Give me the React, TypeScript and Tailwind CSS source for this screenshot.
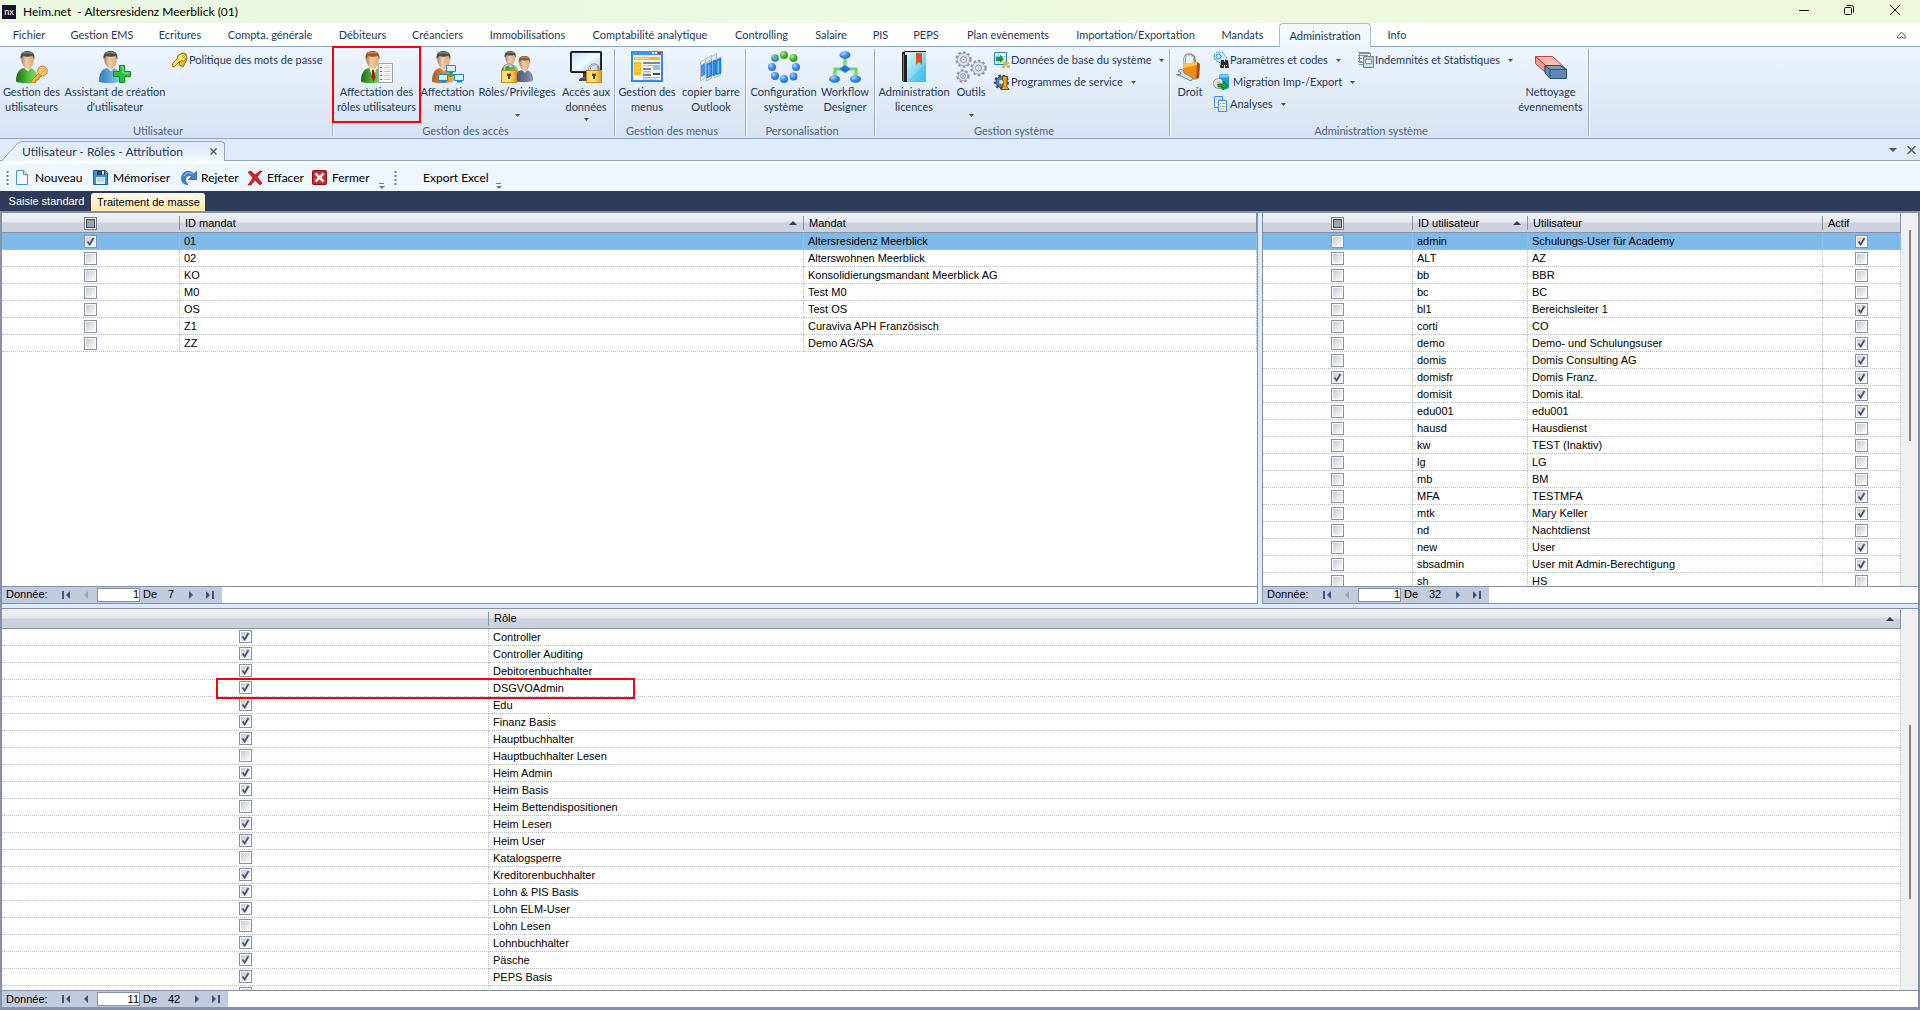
import type { ReactNode } from "react";

/* ---------- window chrome glyphs ---------- */

const DownArrow = () => (
  <svg width="5" height="3" viewBox="0 0 5 3" aria-hidden="true" className="shrink-0">
    <path d="M0 0h5L2.5 3z" fill="#4a5361" />
  </svg>
);

const Overflow = () => (
  <button type="button" aria-label="Options de barre d'outils" className="mt-4">
    <svg width="6" height="6" viewBox="0 0 6 6">
      <path d="M0 .5h5" stroke="#777" />
      <path d="M0 3h6L3 6z" fill="#777" />
    </svg>
  </button>
);

const Grip = () => (
  <svg width="3" height="16" viewBox="0 0 3 16" aria-hidden="true" className="shrink-0">
    <path d="M1.5 1v14" stroke="#7d8088" strokeWidth="2" strokeDasharray="2 2" />
  </svg>
);

/* ---------- ribbon icons ---------- */

const Defs = () => (
  <svg width="0" height="0" className="absolute" aria-hidden="true">
    <defs>
      <linearGradient id="face" x1="0" x2="1">
        <stop offset="0" stopColor="#a87a58" />
        <stop offset="0.4" stopColor="#f0cda6" />
        <stop offset="1" stopColor="#dba878" />
      </linearGradient>
      <linearGradient id="green" x1="0" x2="1">
        <stop offset="0" stopColor="#1d6a14" />
        <stop offset="0.5" stopColor="#4fb838" />
        <stop offset="1" stopColor="#8ede6b" />
      </linearGradient>
      <linearGradient id="blue" x1="0" x2="1">
        <stop offset="0" stopColor="#3279b8" />
        <stop offset="1" stopColor="#8fcdf5" />
      </linearGradient>
      <linearGradient id="orange" x1="0" x2="1">
        <stop offset="0" stopColor="#b85a12" />
        <stop offset="1" stopColor="#f7a94e" />
      </linearGradient>
      <linearGradient id="slate" x1="0" x2="1">
        <stop offset="0" stopColor="#475068" />
        <stop offset="1" stopColor="#8b96b0" />
      </linearGradient>
      <linearGradient id="gold" x1="0" x2="1">
        <stop offset="0" stopColor="#f7d25a" />
        <stop offset="0.45" stopColor="#ffeb90" />
        <stop offset="1" stopColor="#d79a1c" />
      </linearGradient>
      <linearGradient id="screen" x1="0" y1="0" x2="1" y2="1">
        <stop offset="0" stopColor="#c4e6fb" />
        <stop offset="0.5" stopColor="#eef9ff" />
        <stop offset="1" stopColor="#a4d4f4" />
      </linearGradient>
      <linearGradient id="book" x1="0" y1="0" x2="1" y2="1">
        <stop offset="0" stopColor="#d6f6ff" />
        <stop offset="1" stopColor="#3dbfee" />
      </linearGradient>
      <radialGradient id="dotb" cx="0.35" cy="0.3" r="0.8">
        <stop offset="0" stopColor="#a8d2ff" />
        <stop offset="0.5" stopColor="#3b8cf0" />
        <stop offset="1" stopColor="#1f62c4" />
      </radialGradient>
      <radialGradient id="dotg" cx="0.35" cy="0.3" r="0.8">
        <stop offset="0" stopColor="#b7ee94" />
        <stop offset="0.5" stopColor="#55b52e" />
        <stop offset="1" stopColor="#2f8a17" />
      </radialGradient>
    </defs>
  </svg>
);

const Svg = ({ size, children }: { size: number; children: ReactNode }) => (
  <svg width={size} height={size} viewBox={`0 0 ${size} ${size}`} fill="none" aria-hidden="true" className="shrink-0">
    {children}
  </svg>
);

const Person = ({ suit, hair = "#4d4d4d", tie = false }: { suit: string; hair?: string; tie?: boolean }) => (
  <g>
    <path d="M0 30c0-8 3-12 8-13h6c5 1 8 5 8 12 0 2-4 3-11 3S0 31.500 0 30z" fill={suit} />
    {tie ? <path d="M8 16l4 12 4-12z" fill="#f4f4f4" /> : <path d="M8 17l4 3.500 3-3.500z" fill="#dfe7ea" />}
    {tie && <path d="M11 19h2l1.500 7-2 5-2-5z" fill="#b01818" />}
    <path d="M5 6c0-4 3-6 6-6s7 2 7 6c0 6-2 12-6 12S5 12 5 6z" fill="url(#face)" />
    <path d="M4.500 8C4 2 7 0 11.500 0S19 2 18.500 8.500c-1-1-1-2.500-2-3.500-3 1-7 1-9 0-1 1-2 2-3 3z" fill={hair} />
    <path d="M7 2.500q4-2 9 0" stroke="#fff" strokeOpacity="0.300" strokeWidth="1.500" />
  </g>
);

const Padlock = ({ x, y }: { x: number; y: number }) => (
  <g transform={`translate(${x} ${y})`}>
    <path d="M3.500 8V6a4.500 4.500 0 0 1 9 0v2" stroke="#8d959b" strokeWidth="2.500" />
    <path d="M3.200 8V6a4.500 4.500 0 0 1 8-2.500" stroke="#e4e9ec" strokeWidth="1" />
    <rect x="0.500" y="7.500" width="15" height="12" fill="url(#gold)" stroke="#c58f1a" />
    <path d="M6 10.500h4v2.500H9v3H7v-3H6z" fill="#6b4208" />
  </g>
);

const UserKey = () => (
  <Svg size={32}>
    <Person suit="url(#green)" />
    <path d="M15 30l8-8 3 3-3 1v2l-3 1-1 3h-3z" fill="#f5b63e" stroke="#c07718" />
    <circle cx="26.500" cy="20" r="4.800" fill="#fbc765" stroke="#c9812a" />
    <circle cx="27.500" cy="19" r="1.500" fill="#fff" stroke="#c9812a" strokeWidth="0.800" />
  </Svg>
);
const UserPlus = () => (
  <Svg size={32}>
    <Person suit="url(#blue)" />
    <path d="M20.500 14.500h5v6h6v5h-6v6h-5v-6h-6v-5h6z" fill="#2fbf3a" stroke="#138a1e" />
    <path d="M22 16h2v6h6" stroke="#93f09a" />
  </Svg>
);
const UserList = () => (
  <Svg size={32}>
    <Person suit="url(#green)" hair="#a3551c" tie />
    <path d="M17.500 12.500h14v19h-14z" fill="#fafafa" stroke="#a3a3a3" />
    <path d="M19 16.500h2M19 20.500h2M19 24.500h2M19 28.500h2" stroke="#e23030" />
    <path d="M22.500 16.500h7M22.500 20.500h7M22.500 24.500h7M22.500 28.500h7" stroke="#c0c0c0" />
    <path d="M23 14.500h6M23 18.500h6M23 22.500h6M23 26.500h6" stroke="#e2e2e2" />
  </Svg>
);
const UserNet = () => (
  <Svg size={32}>
    <Person suit="url(#orange)" />
    <path d="M19 20v6M11 24h14" stroke="#3ba93b" strokeWidth="2" />
    <g fill="#d9f0ff" stroke="#1a8ccf">
      <path d="M14.500 14.500h9v6h-9zM6.500 23.500h9v6h-9zM22.500 23.500h9v6h-9z" />
    </g>
    <path d="M17 21.500h4M9 30.500h5M25 30.500h5" stroke="#1a8ccf" strokeWidth="2" />
  </Svg>
);
const RolesIcon = () => (
  <Svg size={32}>
    <g transform="scale(0.8)">
      <Person suit="url(#green)" />
    </g>
    <g transform="translate(14 5) scale(0.82)">
      <Person suit="url(#slate)" hair="#8a5c30" />
    </g>
    <Padlock x={0} y={12} />
  </Svg>
);
const DataAccess = () => (
  <Svg size={32}>
    <rect x="0.500" y="0.500" width="31" height="21" rx="1" fill="#2e3033" stroke="#17181a" />
    <rect x="2" y="2" width="28" height="18" fill="url(#screen)" />
    <path d="M13 22h6v4h-6z" fill="#3a3c3f" />
    <path d="M9 29c0-2 3-3 8-3v4H9z" fill="#4b4e52" />
    <Padlock x={16} y={12} />
  </Svg>
);
const MenuWindow = () => (
  <Svg size={32}>
    <rect x="1" y="1" width="30" height="29" fill="#f1f2f4" stroke="#3489ee" strokeWidth="2" />
    <path d="M1 0h30v4H1z" fill="#3f93f3" />
    <path d="M21 2h5" stroke="#fff" strokeWidth="2" strokeDasharray="2 1" />
    <path d="M27 1h3v2h-3z" fill="#e4262b" />
    <path d="M3 6h26v3H3zM3 11h7v13H3z" fill="#fbbd13" />
    <path d="M4 7.500h14M4 14h5M4 17h5M4 20h5" stroke="#fde08a" />
    <path d="M12 12h17M12 18h8M12 24h8" stroke="#5e6166" strokeWidth="1.500" />
    <path d="M12 14.500h17M12 20.500h8M12 22h8M12 26.500h17M12 28h14" stroke="#b9bcc2" />
    <path d="M22 14h7v5h-7z" fill="#8cc2f4" />
    <path d="M22 22h7v2h-7z" fill="#4a4d52" />
  </Svg>
);
const OutlookBar = () => (
  <Svg size={32}>
    <path d="M5.500 11l5-3v19l-5 3zM10.500 8l6-3.500V8l-6 4zM16.500 6l5-3.500V8l-5 3z" fill="#e8ebee" stroke="#b3bac2" />
    <path d="M6 14l4-2v12l-4 2z" fill="#3a94ee" />
    <path d="M11.500 12l5-3v18l-5 3zM19.500 9l6-3v18l-6 3z" fill="#eef1f4" stroke="#b3bac2" />
    <path d="M12 13l5-2.500v14L12 27zM18 10l3-1v14l-3 2zM21.500 9l4.500-2v15l-4.500 2z" fill="#1f8cf0" stroke="#1767b8" strokeWidth="0.600" />
    <path d="M13 14l1.500-.5v11l-1.500.5zM22.500 10l1.500-.5v12l-1.500.5z" fill="#6cbcff" />
  </Svg>
);
const DotRing = () => (
  <Svg size={32}>
    {[
      [16, 4, 4, "g"],
      [25.5, 7, 4, "g"],
      [28, 16, 4, "b"],
      [25.5, 25.5, 4, "b"],
      [16, 28, 4, "b"],
      [7, 25, 4, "b"],
      [4, 16, 4, "b"],
      [7, 7, 3.8, "b"],
    ].map(([x, y, r, c], i) => (
      <circle key={i} cx={x} cy={y} r={r} fill={c === "g" ? "url(#dotg)" : "url(#dotb)"} />
    ))}
    <circle cx="7" cy="7" r="2" fill="#5fc23c" />
  </Svg>
);
const WorkflowIcon = () => (
  <Svg size={32}>
    <path d="M16 7v8M12 18H6v6M20 18h7v6" stroke="#6fd25c" strokeWidth="3" />
    <path d="M13 11h6l-3 4zM3 22h6l-3 4zM24 22h6l-3 4z" fill="#8ae678" />
    <ellipse cx="16" cy="4" rx="5.500" ry="3.800" fill="url(#dotb)" />
    <path d="M16 14l6 4-6 4-6-4z" fill="#2273d6" stroke="#6fb3fa" strokeWidth="0.600" />
    <ellipse cx="5.500" cy="28" rx="5.500" ry="3.800" fill="url(#dotb)" />
    <ellipse cx="26.500" cy="28" rx="5.500" ry="3.800" fill="url(#dotb)" />
  </Svg>
);
const BookIcon = () => (
  <Svg size={32}>
    <path d="M4 1.500L7 0h21v31H6l-2-1z" fill="#1f2022" />
    <path d="M7 1h21v3H7z" fill="#d9dcdf" />
    <path d="M9 2h19v29H9z" fill="url(#book)" />
    <path d="M5.500 3v27" stroke="#77797c" />
    <path d="M18 2h6v12l-3-3-3 3z" fill="#d9531e" />
    <path d="M9 31L28 12v19z" fill="#37b4e6" opacity="0.350" />
  </Svg>
);
const Gear = ({ x, y, r }: { x: number; y: number; r: number }) => (
  <g>
    <circle cx={x} cy={y} r={r} stroke="#8f94b4" strokeWidth="2.400" strokeDasharray="2.600 2" />
    <circle cx={x} cy={y} r={r - 0.8} fill="#dcdeea" stroke="#9da2bf" strokeWidth="0.800" />
    <circle cx={x} cy={y} r={r / 2.4} fill="#f4f5fb" stroke="#8287a8" />
    <circle cx={x} cy={y} r="0.800" fill="#6f7494" />
  </g>
);
const GearsIcon = () => (
  <Svg size={32}>
    <Gear x={8.5} y={8.5} r={7} />
    <Gear x={23.5} y={17} r={7} />
    <Gear x={8} y={25} r={5.5} />
  </Svg>
);
const DroitIcon = () => (
  <Svg size={32}>
    <path d="M11 14l-.5-6c0-6 9.500-6 10 0l.5 5" stroke="#8f9190" strokeWidth="2.600" />
    <path d="M11 13l-.5-5c0-5 8-5 9-1" stroke="#eceeed" />
    <path d="M9 13l14-2 3 2-1 14-5 2-11-5z" fill="#f08d12" />
    <path d="M23 11l3 2-1 14-3 1z" fill="#b04c07" />
    <path d="M9 13l14-2v3L9 17z" fill="#ffc25a" />
    <path d="M4 20c3-3 6-1 6 2l9 5-2 3-10-5c-3 0-5-1-4-2l3 1 1-2z" fill="#cfe0ea" stroke="#6f8796" />
  </Svg>
);
const EraserIcon = () => (
  <Svg size={32}>
    <path d="M0.500 5.500h17l14 13H15.500L.500 5.500z" fill="#f6bdae" stroke="#b84848" />
    <path d="M.500 5.500v7L10 21v-7z" fill="#f09c8c" stroke="#b84848" />
    <path d="M10 14.500h15l6.500 4v9H15L10 22z" fill="#6287b4" stroke="#2f4d70" />
    <path d="M10 14.500h15l6.500 4H15z" fill="#7f9cc0" stroke="#2f4d70" />
    <path d="M15 18.500v9" stroke="#2f4d70" />
  </Svg>
);

/* ---------- small icons ---------- */

const KeysIcon = () => (
  <Svg size={16}>
    <path d="M10 1l4 1 1 5-4 8-4-2 1-5z" fill="#f0c020" stroke="#8d6c0a" />
    <path d="M6 3l6-2 3 4-3 4-4 0-6 6-2-1 1-3 4-4z" fill="#fbe068" stroke="#9a7610" />
    <circle cx="11.500" cy="4.500" r="1" fill="#fff" stroke="#9a7610" strokeWidth="0.700" />
  </Svg>
);
const DataBaseIcon = () => (
  <Svg size={16}>
    <path d="M.5.500h12v12H.500z" fill="#fff" stroke="#2b83e0" />
    <path d="M1 4.500h11M1 9h11M4.500 1v11" stroke="#9cc6f2" />
    <path d="M2 5h4V2.500L10 7l-4 4V9H2z" fill="#1c9a2a" />
    <path d="M9 10h6v2H9zM10 12h2v2h-2zM13 13h3v3h-3zM8 14h3v2H8z" fill="#f6b417" />
  </Svg>
);
const ServiceIcon = () => (
  <Svg size={16}>
    <circle cx="7.500" cy="8" r="6.300" stroke="#344f7c" strokeWidth="2.500" strokeDasharray="2.500 1.800" />
    <circle cx="7.500" cy="8" r="5.500" fill="#5b7cae" stroke="#2b4470" />
    <path d="M8 2.500h6l-1 2v8l2 3H7l2-3V7z" fill="#f0a51c" stroke="#80500a" />
    <circle cx="7" cy="8" r="2" fill="#dfe9f7" />
  </Svg>
);
const ParamIcon = () => (
  <Svg size={16}>
    <path d="M1 3l3-3h5l5 6-5 6-7-4z" fill="#d4eaff" stroke="#2f8ae2" strokeDasharray="2 1" />
    <circle cx="5.500" cy="4.500" r="2.500" stroke="#2f8ae2" />
    <path d="M8 8h3v2h1V8h3l1 8h-4v-3h-1v3H7z" fill="#2b2b2b" />
    <path d="M9 13.500h1M13 13.500h1" stroke="#ddd" />
  </Svg>
);
const MigrationIcon = () => (
  <Svg size={16}>
    <path d="M6 1c3-1.500 7-1.500 10 0v13c-3 2-7 2-10 0z" fill="#1c9be8" />
    <ellipse cx="11" cy="2" rx="5" ry="1.600" fill="#7fd0fa" />
    <circle cx="5.500" cy="9.500" r="5" fill="#e4e6e8" stroke="#8c9196" />
    <circle cx="5.500" cy="9.500" r="1.500" fill="#fff" stroke="#8c9196" />
    <path d="M5 10h5V7l5 4.500-5 4.500v-3H5z" fill="#27a32b" stroke="#0e6c14" strokeWidth="0.800" />
  </Svg>
);
const AnalysesIcon = () => (
  <Svg size={16}>
    <path d="M1.500.500h8v11h-8z" fill="#fff" stroke="#2f8cf0" />
    <path d="M5.500 4.500h8v11h-8z" fill="#fff" stroke="#2f8cf0" />
    <path d="M3 3.500h1M3 6.500h1M7 7.500h1M7 10.500h1M7 13h1" stroke="#f39a1c" />
    <path d="M5 3h3M9 7.500h3M9 10.500h3M9 13h3" stroke="#9aa3ad" />
  </Svg>
);
const StatsIcon = () => (
  <Svg size={16}>
    <path d="M1.500 1.500h11v9h-11z" fill="#eceff1" stroke="#838d94" />
    <path d="M0 .500h12M0 3.500h10M0 6.500h4M0 9.500h4M1 12.500h4" stroke="#838d94" />
    <path d="M5.500 4.500h10v11h-10z" fill="#b9d3de" stroke="#6d8794" />
    <path d="M7.500 7.500h6v4h-6z" fill="#fff" stroke="#5f9fc0" />
    <path d="M6 13.500h9" stroke="#eef6fa" />
  </Svg>
);

const NewIcon = () => (
  <Svg size={16}>
    <path d="M1.500.500h7l4 4v10h-11z" fill="#f5faff" stroke="#4c90d8" />
    <path d="M8.500.500v4h4" fill="#cfe4fa" stroke="#4c90d8" />
  </Svg>
);
const SaveIcon = () => (
  <Svg size={16}>
    <path d="M.500.500h12l2 2v12H.500z" fill="#3a8de0" stroke="#1f5fa8" />
    <path d="M4 1h8v4H4z" fill="#3a3f47" />
    <path d="M9 1h2v3.500H9z" fill="#e9edf2" />
    <path d="M3 7h9v7H3z" fill="#e9f3fd" />
    <path d="M4 9h7M4 11h7" stroke="#8fb8e0" />
  </Svg>
);
const RedoIcon = () => (
  <Svg size={16}>
    <path d="M15.500 1.500v8h-8l3-3C8 4.500 5 6 4.500 9c-.3 2 .5 4 2.500 5.500C3 14.500.500 12 .500 8.500c0-7 8-9.500 12.300-4.500z" fill="#3d85d2" stroke="#1e5da6" strokeWidth="0.800" />
    <path d="M3 6c2-4 6-4 8.500-1.500" stroke="#a4d0fa" />
  </Svg>
);
const DeleteIcon = () => (
  <Svg size={16}>
    <path d="M1 2l3-1 4 4 5-4 2 0-5 6 5 6-2 2-5-5-4 5-3 0 5-7z" fill="#d82222" stroke="#9c1212" strokeWidth="0.700" />
  </Svg>
);
const CloseIcon = () => (
  <Svg size={16}>
    <rect x="0.500" y="0.500" width="14" height="14" rx="1" fill="#d2252b" stroke="#8e1013" />
    <path d="M3.500 3.500l8 8M11.500 3.500l-8 8" stroke="#fff" strokeWidth="2.500" />
  </Svg>
);

/* ---------- ribbon ---------- */

const tabs: [string, string][] = [
  ["Fichier", "w-[58px]"],
  ["Gestion EMS", "w-[88px]"],
  ["Ecritures", "w-[68px]"],
  ["Compta. générale", "w-[112px]"],
  ["Débiteurs", "w-[73px]"],
  ["Créanciers", "w-[77px]"],
  ["Immobilisations", "w-[103px]"],
  ["Comptabilité analytique", "w-[142px]"],
  ["Controlling", "w-[81px]"],
  ["Salaire", "w-[58px]"],
  ["PIS", "w-[41px]"],
  ["PEPS", "w-[50px]"],
  ["Plan evènements", "w-[114px]"],
  ["Importation/Exportation", "w-[141px]"],
  ["Mandats", "w-[73px]"],
  ["Administration", "w-[92px]"],
  ["Info", "w-[52px]"],
];

type BigProps = { icon: ReactNode; lines: string[]; className: string; menu?: boolean };

const Big = ({ icon, lines, className, menu }: BigProps) => (
  <button type="button" className={`flex h-[76px] shrink-0 flex-col items-center pt-1 leading-[15px] whitespace-nowrap ${className}`}>
    {icon}
    {lines.map((l) => (
      <span key={l} className="first-of-type:mt-px">
        {l}
      </span>
    ))}
    {menu && (
      <span className={`mt-auto flex ${lines.length > 1 ? "pb-[2px]" : "pb-[6px]"}`}>
        <DownArrow />
      </span>
    )}
  </button>
);

const Small = ({ icon, label, menu = true, wide = false }: { icon: ReactNode; label: string; menu?: boolean; wide?: boolean }) => (
  <button type="button" className="flex h-[22px] items-center text-left whitespace-nowrap">
    {icon}
    <span className={wide ? "ml-1" : "ml-px"}>{label}</span>
    {menu && (
      <span className="ml-2">
        <DownArrow />
      </span>
    )}
  </button>
);

const Group = ({ label, className, children }: { label: string; className: string; children: ReactNode }) => (
  <section aria-label={label} className={`flex shrink-0 flex-col ${className}`}>
    <div className="flex flex-1 items-start">{children}</div>
    <div className="h-[18px] pr-4 text-center leading-[15px] text-[#4b6088]">{label}</div>
  </section>
);

const Divider = () => (
  <div className="my-[2px] w-px shrink-0 bg-[#9aaed0] shadow-[1px_0_0_#f6faff]" />
);

const Ribbon = () => (
  <div className="flex h-[92px] border-b border-[#8ea4c9] bg-linear-to-b from-[#edf5fe] to-[#d7e3f1] text-[#1e395b]">
    <Group label="Utilisateur" className="w-[332px]">
      <Big className="w-[63px]" icon={<UserKey />} lines={["Gestion des", "utilisateurs"]} />
      <Big className="w-[104px]" icon={<UserPlus />} lines={["Assistant de création", "d'utilisateur"]} />
      <div className="pt-[2px] pl-[5px]">
        <Small icon={<KeysIcon />} label="Politique des mots de passe" menu={false} />
      </div>
    </Group>
    <Divider />
    <Group label="Gestion des accès" className="w-[281px]">
      <Big className="-mt-px -ml-px h-[77px] w-[89px] border-2 border-[#fe0000] pt-[3px]" icon={<UserList />} lines={["Affectation des", "rôles utilisateurs"]} />
      <Big className="w-[53px]" icon={<UserNet />} lines={["Affectation", "menu"]} />
      <Big className="w-[86px]" icon={<RolesIcon />} lines={["Rôles/Privilèges"]} menu />
      <Big className="w-[52px]" icon={<DataAccess />} lines={["Accès aux", "données"]} menu />
    </Group>
    <Divider />
    <Group label="Gestion des menus" className="w-[130px]">
      <Big className="w-[64px]" icon={<MenuWindow />} lines={["Gestion des", "menus"]} />
      <Big className="w-[64px]" icon={<OutlookBar />} lines={["copier barre", "Outlook"]} />
    </Group>
    <Divider />
    <Group label="Personalisation" className="w-[128px]">
      <Big className="w-[75px]" icon={<DotRing />} lines={["Configuration", "système"]} />
      <Big className="w-[48px]" icon={<WorkflowIcon />} lines={["Workflow", "Designer"]} />
    </Group>
    <Divider />
    <Group label="Gestion système" className="w-[294px]">
      <Big className="w-[78px]" icon={<BookIcon />} lines={["Administration", "licences"]} />
      <Big className="w-[36px]" icon={<GearsIcon />} lines={["Outils"]} menu />
      <div className="pt-[2px] pl-[5px]">
        <Small icon={<DataBaseIcon />} label="Données de base du système" />
        <Small icon={<ServiceIcon />} label="Programmes de service" />
      </div>
    </Group>
    <Divider />
    <Group label="Administration système" className="w-[418px]">
      <Big className="w-[40px]" icon={<DroitIcon />} lines={["Droit"]} />
      <div className="w-[150px] pt-[2px] pl-[3px]">
        <Small icon={<ParamIcon />} label="Paramètres et codes" />
        <Small icon={<MigrationIcon />} label="Migration Imp-/Export" wide />
        <Small icon={<AnalysesIcon />} label="Analyses" />
      </div>
      <div className="pt-[2px] pl-[2px]">
        <Small icon={<StatsIcon />} label="Indemnités et Statistiques" />
      </div>
      <Big className="ml-auto w-[75px]" icon={<EraserIcon />} lines={["Nettoyage", "évennements"]} />
    </Group>
    <Divider />
  </div>
);

/* ---------- grid parts ---------- */

const Check = ({ label, checked }: { label: string; checked: boolean }) => (
  <label className="grid h-[13px] w-[13px] place-items-center border border-[#8491a8] bg-white">
    <input
      type="checkbox"
      aria-label={label}
      defaultChecked={checked}
      className="peer col-start-1 row-start-1 h-[9px] w-[9px] appearance-none bg-linear-to-br from-[#c6cad3] to-[#fbfbfc]"
    />
    <svg viewBox="0 0 9 9" className="pointer-events-none invisible col-start-1 row-start-1 h-[9px] w-[9px] peer-checked:visible">
      <path d="M1.500 4.500l2.200 3L7.500 1" fill="none" stroke="#3f5580" strokeWidth="1.800" />
    </svg>
  </label>
);

const CheckAll = ({ label }: { label: string }) => (
  <label className="flex h-[13px] w-[13px] items-center justify-center border border-[#6f7b90] bg-white">
    <input
      type="checkbox"
      aria-label={label}
      className="block h-[9px] w-[9px] shrink-0 appearance-none border border-[#3f4652] bg-[#9aa3b0]"
    />
  </label>
);

const SortArrow = () => (
  <svg width="8" height="4" viewBox="0 0 8 4" aria-hidden="true">
    <path d="M0 4h8L4 0z" fill="#2f3f60" />
  </svg>
);

const Th = ({ children, sorted, last, center }: { children?: ReactNode; sorted?: boolean; last?: boolean; center?: boolean }) => (
  <th
    scope="col"
    className={`h-5 border-b border-[#8491a8] bg-linear-to-b from-[#f0f1f4] from-0% via-[#e6e8ec] via-45% to-[#ccd1de] to-55% p-0 pt-px text-left font-normal ${last ? "border-r" : ""}`}
  >
    <div className={`flex h-[14px] items-center ${center ? "justify-center" : "justify-between pl-[5px]"} ${last ? "" : "border-r border-[#8491a8]"}`}>
      {children}
      {sorted && (
        <span className="pr-[6px]">
          <SortArrow />
        </span>
      )}
    </div>
  </th>
);

const cell = "h-[17px] border-r border-b border-dotted border-[#b9bfca] p-0 overflow-hidden whitespace-nowrap";
const Td = ({ children }: { children?: ReactNode }) => <td className={`${cell} pl-1 leading-4`}>{children}</td>;
const CheckTd = ({ label, checked }: { label: string; checked: boolean }) => (
  <td className={cell}>
    <div className="flex h-4 items-center justify-center">
      <Check label={label} checked={checked} />
    </div>
  </td>
);

const tableClass = "w-full table-fixed border-separate border-spacing-0";

const NavGlyph = ({ d, label, faint }: { d: string; label: string; faint?: boolean }) => (
  <button type="button" aria-label={label} className="flex h-4 w-5 items-center justify-center">
    <svg width="9" height="8" viewBox="0 0 9 8">
      <path d={d} fill={faint ? "#97a3b8" : "#3c5580"} />
    </svg>
  </button>
);

const Navigator = ({ id, value, total, atStart, width }: { id: string; value: string; total: string; atStart: boolean; width: string }) => (
  <div className="h-[18px] border-y border-[#8491a8] bg-white">
    <div className={`flex h-4 items-center bg-[#c2cbdb] pr-[2px] ${width}`}>
      <label htmlFor={id} className="w-[54px] pl-1">
        Donnée:
      </label>
      <NavGlyph label="Premier" d="M0 0h2v8H0zM8 0v8L4 4z" />
      <NavGlyph label="Précédent" d="M6 0v8L2 4z" faint={atStart} />
      <input
        id={id}
        type="text"
        defaultValue={value}
        className="ml-px h-[14px] w-[43px] border border-[#8491a8] bg-white text-right"
      />
      <span className="ml-[3px] w-[25px]">De</span>
      <span>{total}</span>
      <span className="ml-auto flex">
        <NavGlyph label="Suivant" d="M3 0v8l4-4z" />
        <NavGlyph label="Dernier" d="M0 0v8l4-4zM6 0h2v8H6z" />
      </span>
    </div>
  </div>
);

const Scroller = ({ className, size }: { className: string; size: string }) => (
  <div className="flex w-[17px] shrink-0 justify-center bg-[#f0f0f0]">
    <div className={`w-[2px] bg-[#868686] ${className} ${size}`} />
  </div>
);

/* ---------- data ---------- */

const mandates: [string, string][] = [
  ["01", "Altersresidenz Meerblick"],
  ["02", "Alterswohnen Meerblick"],
  ["KO", "Konsolidierungsmandant Meerblick AG"],
  ["M0", "Test M0"],
  ["OS", "Test OS"],
  ["Z1", "Curaviva APH Französisch"],
  ["ZZ", "Demo AG/SA"],
];

const users: [string, string, boolean][] = [
  ["admin", "Schulungs-User für Academy", true],
  ["ALT", "AZ", false],
  ["bb", "BBR", false],
  ["bc", "BC", false],
  ["bl1", "Bereichsleiter 1", true],
  ["corti", "CO", false],
  ["demo", "Demo- und Schulungsuser", true],
  ["domis", "Domis Consulting AG", true],
  ["domisfr", "Domis Franz.", true],
  ["domisit", "Domis ital.", true],
  ["edu001", "edu001", true],
  ["hausd", "Hausdienst", false],
  ["kw", "TEST (Inaktiv)", false],
  ["lg", "LG", false],
  ["mb", "BM", false],
  ["MFA", "TESTMFA", true],
  ["mtk", "Mary Keller", true],
  ["nd", "Nachtdienst", false],
  ["new", "User", true],
  ["sbsadmin", "User mit Admin-Berechtigung", true],
  ["sh", "HS", false],
];

const roles: [string, boolean][] = [
  ["Controller", true],
  ["Controller Auditing", true],
  ["Debitorenbuchhalter", true],
  ["DSGVOAdmin", true],
  ["Edu", true],
  ["Finanz Basis", true],
  ["Hauptbuchhalter", true],
  ["Hauptbuchhalter Lesen", false],
  ["Heim Admin", true],
  ["Heim Basis", true],
  ["Heim Bettendispositionen", false],
  ["Heim Lesen", true],
  ["Heim User", true],
  ["Katalogsperre", false],
  ["Kreditorenbuchhalter", true],
  ["Lohn & PIS Basis", true],
  ["Lohn ELM-User", true],
  ["Lohn Lesen", false],
  ["Lohnbuchhalter", true],
  ["Päsche", true],
  ["PEPS Basis", true],
  ["peps mandat", true],
];

const ToolButton = ({ icon, label, className }: { icon?: ReactNode; label: string; className: string }) => (
  <button type="button" className={`flex shrink-0 items-center gap-1 whitespace-nowrap ${className}`}>
    {icon}
    {label}
  </button>
);

export default function App() {
  return (
    <div className="flex h-screen min-h-[600px] flex-col overflow-hidden bg-white font-['Lato',sans-serif] text-[11px] text-black">
      <Defs />

      <header className="flex h-[23px] shrink-0 items-center bg-linear-to-r from-[#eaf8e2] to-[#eff8dc]">
        <span className="ml-[2px] flex h-[14px] w-[14px] items-center justify-center bg-[#15152e] text-[9px] leading-none text-white">nx</span>
        <h1 className="ml-[7px] text-[12px] whitespace-pre">Heim.net{"  "}- Altersresidenz Meerblick (01)</h1>
        <div className="ml-auto flex h-full items-start pr-[2px]">
          <button type="button" aria-label="Réduire" className="flex h-5 w-[45px] items-center justify-center">
            <svg width="10" height="10" viewBox="0 0 10 10" stroke="#111">
              <path d="M0 5.500h10" />
            </svg>
          </button>
          <button type="button" aria-label="Restaurer" className="flex h-5 w-[46px] items-center justify-center">
            <svg width="10" height="10" viewBox="0 0 10 10" stroke="#111" fill="none">
              <rect x="0.500" y="2.500" width="7" height="7" rx="1" />
              <path d="M2.500.500h5a2 2 0 0 1 2 2v5" />
            </svg>
          </button>
          <button type="button" aria-label="Fermer la fenêtre" className="flex h-5 w-[46px] items-center justify-center">
            <svg width="10" height="10" viewBox="0 0 10 10" stroke="#111">
              <path d="M0 0l10 10M10 0L0 10" />
            </svg>
          </button>
        </div>
      </header>

      <nav aria-label="Ruban" className="flex h-6 shrink-0 items-stretch border-b border-[#8ea4c9] bg-white text-[#1e395b]">
        {tabs.map(([name, width]) => (
          <button
            key={name}
            type="button"
            className={`shrink-0 pt-px whitespace-nowrap ${width} ${
              name === "Administration" ? "-mb-px rounded-t-[4px] border border-b-0 border-[#a9bbd6] bg-linear-to-b from-[#f4f9ff] to-[#edf5fe]" : ""
            }`}
          >
            {name}
          </button>
        ))}
        <button type="button" aria-label="Réduire le ruban" className="mr-[14px] ml-auto">
          <svg width="9" height="8" viewBox="0 0 9 8" fill="none" stroke="#555">
            <path d="M.500 5.500l4-4.500 4 4.500v1.500H6L4.500 5.500 3 7H.500z" />
          </svg>
        </button>
      </nav>

      <Ribbon />

      <div className="flex h-[22px] shrink-0 items-end border-b border-[#8ea4c9] bg-[#dfebfb]">
        <div className="-mb-px flex h-5 w-[225px] items-stretch pl-[2px] text-[12px] text-[#1e395b]">
          <svg width="20" height="20" viewBox="0 0 20 20" fill="none" aria-hidden="true" className="shrink-0">
            <path d="M0 20L15 3q3-2.500 5-2.500V20z" fill="#e8f1fc" />
            <path d="M0 19.500L15 3q3-2.500 5-2.500" stroke="#8ea4c9" />
          </svg>
          <div className="flex flex-1 items-center justify-between rounded-tr-[4px] border-t border-r border-[#8ea4c9] bg-linear-to-b from-[#dce9f8] to-[#f1f7fe] pr-[7px]">
            <span>Utilisateur - Rôles - Attribution</span>
            <button type="button" aria-label="Fermer l'onglet">
              <svg width="7" height="7" viewBox="0 0 7 7" stroke="#555" strokeWidth="1.300">
                <path d="M.500.500l6 6M6.500.500l-6 6" />
              </svg>
            </button>
          </div>
        </div>
        <div className="mr-1 ml-auto flex h-full items-center gap-[10px]">
          <button type="button" aria-label="Liste des onglets">
            <svg width="8" height="4" viewBox="0 0 8 4">
              <path d="M0 0h8L4 4z" fill="#555" />
            </svg>
          </button>
          <button type="button" aria-label="Fermer le document">
            <svg width="9" height="8" viewBox="0 0 9 8" stroke="#555" strokeWidth="1.500">
              <path d="M.500 0l8 8M8.500 0l-8 8" />
            </svg>
          </button>
        </div>
      </div>

      <div className="flex h-[30px] shrink-0 items-center border-t-[3px] border-white bg-[#edf5fd] pl-[6px] text-[12px]">
        <Grip />
        <ToolButton className="ml-[6px] w-[78px]" icon={<NewIcon />} label="Nouveau" />
        <ToolButton className="w-[88px]" icon={<SaveIcon />} label="Mémoriser" />
        <ToolButton className="w-[66px]" icon={<RedoIcon />} label="Rejeter" />
        <ToolButton className="w-[65px]" icon={<DeleteIcon />} label="Effacer" />
        <ToolButton className="w-[67px]" icon={<CloseIcon />} label="Fermer" />
        <Overflow />
        <span className="ml-[9px] flex">
          <Grip />
        </span>
        <ToolButton className="ml-[26px] w-[73px]" label="Export Excel" />
        <Overflow />
      </div>

      <div className="flex h-5 shrink-0 items-end bg-[#2d3b59] font-['Liberation_Sans',sans-serif]">
        <button type="button" className="h-[19px] w-[91px] pl-[2px] text-white">
          Saisie standard
        </button>
        <button type="button" className="h-[18px] w-[114px] rounded-t-[3px] bg-linear-to-b from-[#fffbf0] to-[#ffe9a8] pt-px pl-px">
          Traitement de masse
        </button>
      </div>

      <main className="flex min-h-0 flex-1 flex-col gap-1 border-2 border-[#8491a8] bg-[#dcebfb] font-['Liberation_Sans',sans-serif]">
        <div className="grid min-h-0 grow-[391] basis-0 grid-cols-[1256fr_656fr] gap-1">
          <section aria-label="Mandats" className="flex min-h-0 min-w-0 flex-col border-r border-[#8491a8] bg-white">
            <div className="min-h-0 flex-1 overflow-hidden">
              <table className={tableClass}>
                <colgroup>
                  <col className="w-[178px]" />
                  <col className="w-[624px]" />
                  <col />
                </colgroup>
                <thead>
                  <tr>
                    <Th center>
                      <CheckAll label="Tous les mandats" />
                    </Th>
                    <Th sorted>ID mandat</Th>
                    <Th last>Mandat</Th>
                  </tr>
                </thead>
                <tbody>
                  {mandates.map(([id, name], i) => (
                    <tr key={id} className={i === 0 ? "bg-[#7fb9ea]" : ""}>
                      <CheckTd label={`Mandat ${id}`} checked={i === 0} />
                      <Td>{id}</Td>
                      <Td>{name}</Td>
                    </tr>
                  ))}
                </tbody>
              </table>
            </div>
            <Navigator id="nav-mandats" value="1" total="7" atStart width="w-[220px]" />
          </section>

          <section aria-label="Utilisateurs" className="flex min-h-0 min-w-0 flex-col border-l border-[#8491a8] bg-white">
            <div className="flex min-h-0 flex-1">
              <div className="min-w-0 flex-1 overflow-hidden">
                <table className={tableClass}>
                  <colgroup>
                    <col className="w-[150px]" />
                    <col className="w-[115px]" />
                    <col />
                    <col className="w-[78px]" />
                  </colgroup>
                  <thead>
                    <tr>
                      <Th center>
                        <CheckAll label="Tous les utilisateurs" />
                      </Th>
                      <Th sorted>ID utilisateur</Th>
                      <Th>Utilisateur</Th>
                      <Th last>Actif</Th>
                    </tr>
                  </thead>
                  <tbody>
                    {users.map(([id, name, active], i) => (
                      <tr key={id} className={i === 0 ? "bg-[#7fb9ea]" : ""}>
                        <CheckTd label={`Utilisateur ${id}`} checked={id === "domisfr"} />
                        <Td>{id}</Td>
                        <Td>{name}</Td>
                        <CheckTd label={`${id} actif`} checked={active} />
                      </tr>
                    ))}
                  </tbody>
                </table>
              </div>
              <Scroller className="mt-[17px]" size="h-[211px]" />
            </div>
            <Navigator id="nav-utilisateurs" value="1" total="32" atStart width="w-[226px]" />
          </section>
        </div>

        <section aria-label="Rôles" className="flex min-h-0 grow-[400] basis-0 flex-col border-t border-[#8491a8] bg-white">
          <div className="flex min-h-0 flex-1">
            <div className="min-w-0 flex-1 overflow-hidden">
              <table className={tableClass}>
                <colgroup>
                  <col className="w-[487px]" />
                  <col />
                </colgroup>
                <thead>
                  <tr>
                    <Th />
                    <Th sorted last>
                      Rôle
                    </Th>
                  </tr>
                </thead>
                <tbody>
                  {roles.map(([name, on]) => (
                    <tr key={name} className={name === "DSGVOAdmin" ? "relative" : ""}>
                      <CheckTd label={`Rôle ${name}`} checked={on} />
                      <td className={`${cell} pl-1 leading-4`}>
                        {name}
                        {name === "DSGVOAdmin" && (
                          <span aria-hidden="true" className="pointer-events-none absolute -top-[2px] left-[214px] h-[21px] w-[419px] border-2 border-[#fe0000]" />
                        )}
                      </td>
                    </tr>
                  ))}
                </tbody>
              </table>
            </div>
            <Scroller className="mt-[116px]" size="h-[174px]" />
          </div>
          <Navigator id="nav-roles" value="11" total="42" atStart={false} width="w-[226px]" />
        </section>
      </main>
    </div>
  );
}
